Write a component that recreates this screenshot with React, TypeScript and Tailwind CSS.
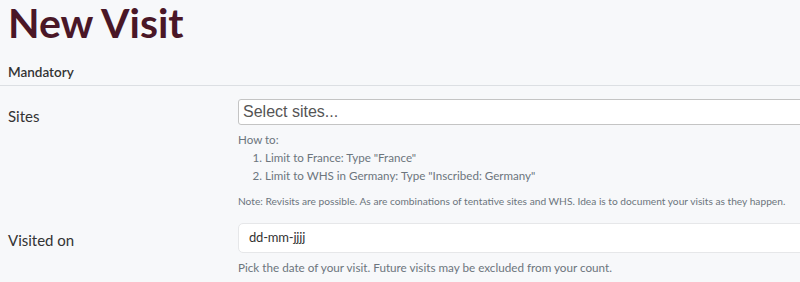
export default function App() {
  return (
    <div className="h-[282px] w-[800px] overflow-hidden bg-[#f7f8fa] font-['Lato',sans-serif] text-[#333]">
      <div className="px-2">
        <h1 className="text-[41px] font-bold leading-[46px] text-[#4a1727]">New Visit</h1>
      </div>

      <div className="mt-[16px] border-b border-[#dcdfe3] px-2 pb-[3px]">
        <h2 className="text-[13.5px] font-semibold leading-5">Mandatory</h2>
      </div>

      <div className="flex px-2 pt-[13px]">
        <label className="w-[230px] shrink-0 pt-[7px] text-[15px] leading-5">Sites</label>
        <div className="flex-1">
          <div className="flex h-[26px] w-[600px] items-center rounded-[3px] border border-[#c4c4c4] bg-white px-1">
            <span className="font-['Liberation_Sans',sans-serif] text-[16px] text-[#555]">Select sites...</span>
          </div>
          <div className="mt-[6px] text-[11.6px] leading-[18px] text-[#6c757d]">
            <p>How to:</p>
            <ol className="list-decimal pl-[27px]">
              <li>Limit to France: Type "France"</li>
              <li>Limit to WHS in Germany: Type "Inscribed: Germany"</li>
            </ol>
            <p className="mt-[8px] whitespace-nowrap text-[10.2px] leading-4">
              Note: Revisits are possible. As are combinations of tentative sites and WHS. Idea is to document your visits as they happen.
            </p>
          </div>
        </div>
      </div>

      <div className="mt-[14px] flex px-2">
        <label className="w-[230px] shrink-0 pt-[7px] text-[15px] leading-5">Visited on</label>
        <div className="flex-1">
          <div className="flex h-[30px] w-[600px] items-center rounded-[5px] border border-[#e6e7e9] bg-white px-[10px]">
            <span className="text-[13px] tracking-[-0.2px] text-[#333]">dd-mm-jjjj</span>
          </div>
          <p className="mt-[5px] text-[11.7px] leading-[18px] text-[#6c757d]">
            Pick the date of your visit. Future visits may be excluded from your count.
          </p>
        </div>
      </div>
    </div>
  );
}
